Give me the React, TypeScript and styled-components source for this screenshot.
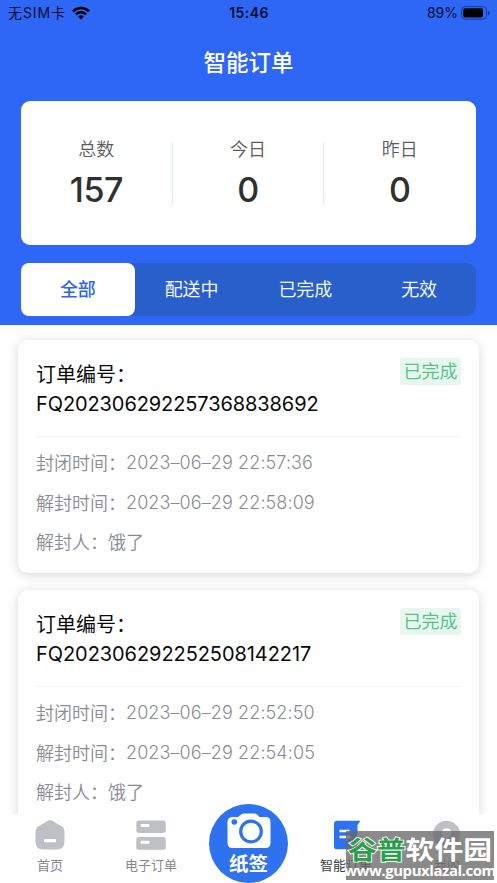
import React from "react";
import styled, { createGlobalStyle } from "styled-components";

const Global = createGlobalStyle`
  * { box-sizing: border-box; }
  html, body { margin: 0; padding: 0; background: #fff; overflow: hidden; }
  body { font-family: Inter, "Noto Sans CJK SC", sans-serif; font-feature-settings: "calt" 0; }
`;

const Screen = styled.div`
  position: relative;
  width: 497px;
  height: 883px;
  overflow: hidden;
  display: flex;
  flex-direction: column;
  background: #fff;
`;

const Header = styled.header`
  height: 325px;
  flex: none;
  background: #2e66f6;
  display: flex;
  flex-direction: column;
`;

const StatusBar = styled.div`
  height: 26px;
  padding: 0 7px 0 8px;
  display: grid;
  grid-template-columns: 1fr auto 1fr;
  align-items: center;
  font-size: 14px;
  line-height: 26px;
  color: #06102b;
`;

const Carrier = styled.div`
  display: flex;
  align-items: center;
  gap: 6px;
  white-space: pre;
`;

const CarrierName = styled.span`
  letter-spacing: 0.9px;
`;

const Clock = styled.div`
  font-weight: 600;
  letter-spacing: 0.45px;
`;

const Battery = styled.div`
  display: flex;
  align-items: center;
  justify-content: flex-end;
  gap: 3px;
`;

const Title = styled.h1`
  margin: 0;
  height: 75px;
  line-height: 73px;
  text-align: center;
  font-size: 22.5px;
  font-weight: 500;
  color: #fff;
`;

const Stats = styled.section`
  margin: 0 21px;
  height: 144px;
  border-radius: 9px;
  background: #fff;
  display: grid;
  grid-template-columns: repeat(3, 1fr);
  align-items: center;
`;

const Stat = styled.div<{ $divided?: boolean }>`
  height: 62px;
  display: flex;
  flex-direction: column;
  align-items: center;
  border-right: ${(p) => (p.$divided ? "1.5px solid #dde7fb" : "1px solid transparent")};
`;

const StatLabel = styled.span`
  height: 26px;
  margin-top: -5px;
  line-height: 26px;
  font-size: 18px;
  font-weight: 350;
  color: #5c5c5c;
`;

const StatValue = styled.span`
  margin-top: 7px;
  font-size: 34px;
  line-height: 40px;
  font-weight: 500;
  letter-spacing: -0.5px;
  color: #303030;
`;

const Tabs = styled.nav`
  margin: 18px 21px 0;
  height: 53px;
  border-radius: 9px;
  background: #295fca;
  display: grid;
  grid-template-columns: repeat(4, 1fr);
`;

const Tab = styled.button<{ $active?: boolean }>`
  border: 0;
  padding: 0;
  border-radius: 8px;
  font: inherit;
  font-size: 18px;
  line-height: 52px;
  font-weight: ${(p) => (p.$active ? 500 : 400)};
  color: ${(p) => (p.$active ? "#2e66f6" : "#f2f6ff")};
  background: ${(p) => (p.$active ? "#fff" : "transparent")};
`;

const List = styled.main`
  flex: 1;
  min-height: 0;
  overflow: hidden;
  padding: 15px 18px 0;
  display: flex;
  flex-direction: column;
  gap: 17px;
`;

const Card = styled.article`
  flex: none;
  height: 233px;
  padding: 18px 18px 0;
  border-radius: 10px;
  background: #fff;
  box-shadow: 0 2px 12px rgba(0, 0, 0, 0.16);
`;

const CardHead = styled.div`
  height: 79px;
  display: flex;
  justify-content: space-between;
  align-items: flex-start;
  border-bottom: 1px solid #f1f1f2;
`;

const OrderTitle = styled.div`
  padding-top: 2px;
  font-size: 20px;
  line-height: 30px;
  color: #0a0a0a;
`;

const OrderNumber = styled.div<{ $tracking: number }>`
  margin-top: -1px;
  line-height: 30px;
  letter-spacing: ${(p) => p.$tracking}px;
`;

const Badge = styled.span`
  width: 61px;
  height: 27px;
  border-radius: 2px;
  background: #e7f7ef;
  color: #56c586;
  font-size: 18px;
  line-height: 28px;
  text-align: center;
`;

const Details = styled.div`
  padding-top: 7px;
`;

const Detail = styled.div`
  height: 39.6px;
  line-height: 40px;
  font-size: 18px;
  font-weight: 350;
  color: #8b8b93;
  display: flex;
`;

const Value = styled.span`
  margin-top: -1px;
  letter-spacing: 0.1px;
`;

const TabBar = styled.nav`
  position: absolute;
  left: 0;
  right: 0;
  bottom: 0;
  height: 69px;
  background: #fefefe;
  display: grid;
  grid-template-columns: 100px 102px 93px 102px 100px;
`;

const NavItem = styled.div<{ $active?: boolean }>`
  display: flex;
  flex-direction: column;
  align-items: center;
  gap: 5px;
  padding-top: 6px;
  font-size: 13px;
  line-height: 20px;
  white-space: nowrap;
  color: ${(p) => (p.$active ? "#3c3d43" : "#85868c")};
`;

const ScanButton = styled.div`
  width: 79px;
  height: 79px;
  margin: -10px auto 0;
  border-radius: 50%;
  background: #2f72f0;
  color: #fff;
  font-size: 19.5px;
  font-weight: 700;
  line-height: 30px;
  display: flex;
  flex-direction: column;
  align-items: center;
  padding-top: 9px;
`;

const Watermark = styled.div`
  position: absolute;
  left: 346px;
  top: 831px;
  width: 148px;
  height: 49px;
  background: rgba(105, 105, 105, 0.78);
  display: flex;
  flex-direction: column;
  align-items: center;
  white-space: nowrap;
`;

const MarkName = styled.div`
  height: 33px;
  line-height: 36px;
  font-family: "Noto Sans CJK SC", sans-serif;
  font-size: 28.8px;
  font-weight: 700;
  color: #fff;
  transform: scaleY(0.88);
`;

const MarkAccent = styled.span`
  color: #2a9f4a;
  -webkit-text-stroke: 2px #fff;
  paint-order: stroke fill;
`;

const MarkUrl = styled.div`
  height: 16px;
  line-height: 13px;
  font-family: "Open Sans", sans-serif;
  font-size: 15px;
  font-weight: 700;
  letter-spacing: -0.45px;
  color: #fff;
`;

const WifiIcon = () => (
  <svg width="18" height="14" viewBox="0 0 18 14">
    <g fill="none" stroke="#000" strokeWidth="2.5">
      <path d="M1 5.3a11.4 11.4 0 0 1 16 0" />
      <path d="M3.9 8.4a7.3 7.3 0 0 1 10.2 0" />
    </g>
    <path d="M9 13.5 6.2 10.6a4 4 0 0 1 5.6 0Z" fill="#000" />
  </svg>
);

const BatteryIcon = () => (
  <svg width="29" height="14" viewBox="0 0 29 14">
    <rect x="0.6" y="0.6" width="25" height="12.6" rx="3.6" fill="none" stroke="#173c9b" />
    <rect x="2.2" y="2.2" width="19.8" height="9.4" rx="2" fill="#000" />
    <path d="M27 4.7a2.4 2.4 0 0 1 0 4.6Z" fill="#173c9b" />
  </svg>
);

const HomeIcon = () => (
  <svg width="30" height="30" viewBox="0 0 30 30">
    <path d="M12 1.2Q15-.6 18 1.2L26.5 6.3Q29.5 8.2 29.5 12V21.5Q29.5 29.5 21.5 29.5H8.5Q.5 29.5.5 21.5V12Q.5 8.2 3.5 6.3Z" fill="#bfbfc6" />
    <rect x="9" y="19" width="12" height="3.2" rx="1" fill="#fff" />
  </svg>
);

const ArchiveIcon = () => (
  <svg width="30" height="30" viewBox="0 0 30 30">
    <g fill="#bfbfc6">
      <rect x="0.3" y="0.5" width="29.4" height="12.5" rx="2.5" />
      <rect x="0.3" y="17" width="29.4" height="12.8" rx="2.5" />
    </g>
    <g fill="#fff">
      <rect x="4.5" y="4" width="9" height="3" rx="1" />
      <rect x="4.5" y="20.8" width="9" height="3" rx="1" />
    </g>
  </svg>
);

const CameraIcon = () => (
  <svg width="44" height="36" viewBox="0 0 44 36">
    <path d="M5 4H11L14.5 1.3Q15.5.5 17 .5H27.5Q29 .5 30 1.5L32.5 4H39.5Q43.5 4.5 43.5 9V30Q43.5 35 38.5 35H5.5Q.5 35 .5 30V9Q.5 4.5 5 4Z" fill="#fff" />
    <circle cx="24" cy="18.5" r="10.3" fill="none" stroke="#2f72f0" strokeWidth="3.2" />
    <circle cx="7.3" cy="9" r="2.8" fill="#2f72f0" />
  </svg>
);

const OrderIcon = () => (
  <svg width="30" height="30" viewBox="0 0 30 30">
    <path d="M6.5 .8H29.5L26.5 5V27Q26.5 29.3 23.5 29.3H5.5Q3 29.3 3 26.5V4Q3 .8 6.5 .8Z" fill="#2f72f0" />
    <path d="M8.5 11h10M8.5 17h11" stroke="#fff" strokeWidth="2.4" />
  </svg>
);

const ProfileIcon = () => (
  <svg width="30" height="30" viewBox="0 0 30 30">
    <circle cx="14.5" cy="14.3" r="13.5" fill="#bfbfc6" />
    <circle cx="14.5" cy="13" r="4.8" fill="#fff" />
  </svg>
);

const stats = [
  { label: "总数", value: "157" },
  { label: "今日", value: "0" },
  { label: "昨日", value: "0" },
];

const tabs = ["全部", "配送中", "已完成", "无效"];

const orders = [
  { id: "FQ202306292257368838692", sealed: "2023–06–29 22:57:36", opened: "2023–06–29 22:58:09", tracking: -0.1 },
  { id: "FQ202306292252508142217", sealed: "2023–06–29 22:52:50", opened: "2023–06–29 22:54:05", tracking: -0.07 },
];

export default function App() {
  return (
    <>
      <Global />
      <Screen>
        <Header>
          <StatusBar>
            <Carrier><CarrierName>无SIM卡</CarrierName><WifiIcon /></Carrier>
            <Clock>15:46</Clock>
            <Battery><span>89%</span><BatteryIcon /></Battery>
          </StatusBar>
          <Title>智能订单</Title>
          <Stats>
            {stats.map((s, i) => (
              <Stat key={s.label} $divided={i < 2}>
                <StatLabel>{s.label}</StatLabel>
                <StatValue>{s.value}</StatValue>
              </Stat>
            ))}
          </Stats>
          <Tabs>
            {tabs.map((t, i) => <Tab key={t} $active={i === 0}>{t}</Tab>)}
          </Tabs>
        </Header>
        <List>
          {orders.map((o) => (
            <Card key={o.id}>
              <CardHead>
                <OrderTitle>
                  订单编号：
                  <OrderNumber $tracking={o.tracking}>{o.id}</OrderNumber>
                </OrderTitle>
                <Badge>已完成</Badge>
              </CardHead>
              <Details>
                <Detail>封闭时间：<Value>{o.sealed}</Value></Detail>
                <Detail>解封时间：<Value>{o.opened}</Value></Detail>
                <Detail>解封人：<span>饿了</span></Detail>
              </Details>
            </Card>
          ))}
        </List>
        <TabBar>
          <NavItem><HomeIcon />首页</NavItem>
          <NavItem><ArchiveIcon />电子订单</NavItem>
          <ScanButton><CameraIcon />纸签</ScanButton>
          <NavItem $active><OrderIcon />智能订单</NavItem>
          <NavItem><ProfileIcon />我的</NavItem>
        </TabBar>
        <Watermark>
          <MarkName><MarkAccent>谷普</MarkAccent>软件园</MarkName>
          <MarkUrl>www.gupuxlazal.com</MarkUrl>
        </Watermark>
      </Screen>
    </>
  );
}
